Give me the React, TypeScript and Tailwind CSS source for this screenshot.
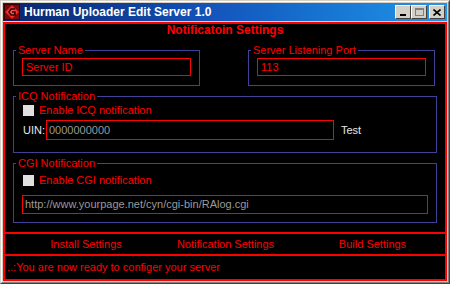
function TitleButton({ children }: { children: React.ReactNode }) {
  return (
    <div className="w-[16px] h-[14px] bg-[#d4d0c8] border border-t-white border-l-white border-r-[#404040] border-b-[#404040] flex items-center justify-center">
      {children}
    </div>
  );
}

function Checkbox() {
  return <div className="w-[11px] h-[11px] bg-[#e0e0e0]" />;
}

function Group({ title, className, children }: { title: string; className: string; children: React.ReactNode }) {
  return (
    <fieldset className={"border border-[#41419a] " + className}>
      <legend className="ml-[2px] px-[2px]">{title}</legend>
      {children}
    </fieldset>
  );
}

export default function App() {
  return (
    <div className="w-[450px] h-[284px] bg-[#d4d0c8] border border-t-[#d4d0c8] border-l-[#d4d0c8] border-r-[#404040] border-b-[#404040] font-['Liberation_Sans',Arial,sans-serif] text-[11px] leading-[13px]">
      <div className="h-full border border-t-white border-l-white border-r-[#808080] border-b-[#808080] p-px flex flex-col">
        {/* caption */}
        <div className="h-[18px] flex items-center pl-px pr-[2px] bg-linear-to-r from-[#0a246a] via-[#1458c0] to-[#2196e8]">
          <svg width="16" height="16" viewBox="0 0 16 16">
            <rect x="0" y="0" width="16" height="16" fill="#3a0000" />
            <rect x="1" y="1" width="14" height="14" fill="#7a0a0a" />
            <polygon points="8,1 15,8 8,15 1,8" fill="#e82020" />
            <polygon points="8,3 13,8 8,13 3,8" fill="#ff5050" />
            <path d="M11 5 H7 L5 8 L7 11 H11 V8 H8" fill="none" stroke="#300000" strokeWidth="1.6" />
          </svg>
          <span className="ml-[4px] text-white font-bold text-[12px] leading-[14px]">
            Hurman Uploader Edit Server 1.0
          </span>
          <div className="ml-auto flex items-center">
            <TitleButton>
              <div className="w-[6px] h-[2px] bg-black mt-[6px] -ml-px" />
            </TitleButton>
            <TitleButton>
              <div className="w-[9px] h-[8px] border border-[#808080] border-t-2" />
            </TitleButton>
            <div className="ml-[2px]">
              <TitleButton>
                <svg width="8" height="7" viewBox="0 0 8 7">
                  <path d="M0.5 0.5 L7.5 6.5 M7.5 0.5 L0.5 6.5" stroke="black" strokeWidth="1.6" />
                </svg>
              </TitleButton>
            </div>
          </div>
        </div>

        {/* client */}
        <div className="mt-px flex-1 border-2 border-[#ff0000] bg-black flex flex-col text-[#ff0000]">
          <div className="h-[210px] border-b-2 border-[#ff0000] pl-[8px] pr-[8px] flex flex-col">
            <div className="h-[13px] leading-[13px] -ml-[8px] -mr-[8px] text-center font-bold text-[12px]">
              Notificatoin Settings
            </div>

            <div className="mt-[7px] flex gap-[48px]">
              <Group title="Server Name" className="w-[187px]">
                <div className="px-[8px] pt-px pb-[9px]">
                  <div className="h-[18px] border border-[#ff0000] pl-[3px] flex items-center">Server ID</div>
                </div>
              </Group>
              <Group title="Server Listening Port" className="w-[187px]">
                <div className="px-[8px] pt-px pb-[9px]">
                  <div className="h-[18px] border border-[#ff0000] pl-[3px] flex items-center">113</div>
                </div>
              </Group>
            </div>

            <Group title="ICQ Notification" className="mt-[4px]">
              <div className="pl-[9px] pt-px pb-[12px]">
                <div className="h-[13px] flex items-center gap-[5px]">
                  <Checkbox />
                  <span>Enable ICQ notification</span>
                </div>
                <div className="mt-[3px] flex items-center">
                  <span className="text-[#e8e8e8] w-[23px]">UIN:</span>
                  <div className="w-[288px] h-[20px] border border-[#ff0000] pl-[2px] flex items-center text-[#9a9a9a]">
                    0000000000
                  </div>
                  <span className="ml-[7px] text-[#e8e8e8]">Test</span>
                </div>
              </div>
            </Group>

            <Group title="CGI Notification" className="mt-[4px]">
              <div className="px-[8px] pt-[4px] pb-[8px]">
                <div className="pl-px h-[13px] flex items-center gap-[5px]">
                  <Checkbox />
                  <span>Enable CGI notification</span>
                </div>
                <div className="mt-[8px] h-[19px] border border-[#ff0000] pl-[2px] flex items-center text-[#9a9a9a]">
                  http://www.yourpage.net/cyn/cgi-bin/RAlog.cgi
                </div>
              </div>
            </Group>
          </div>

          <div className="h-[22px] border-b-2 border-[#ff0000] flex items-center">
            <div className="w-[162px] text-center">Install Settings</div>
            <div className="w-[117px] text-center">Notification Settings</div>
            <div className="w-[161px] pl-[16px] text-center">Build Settings</div>
          </div>

          <div className="flex-1 flex items-center pl-[2px]">..:You are now ready to configer your server</div>
        </div>
      </div>
    </div>
  );
}
